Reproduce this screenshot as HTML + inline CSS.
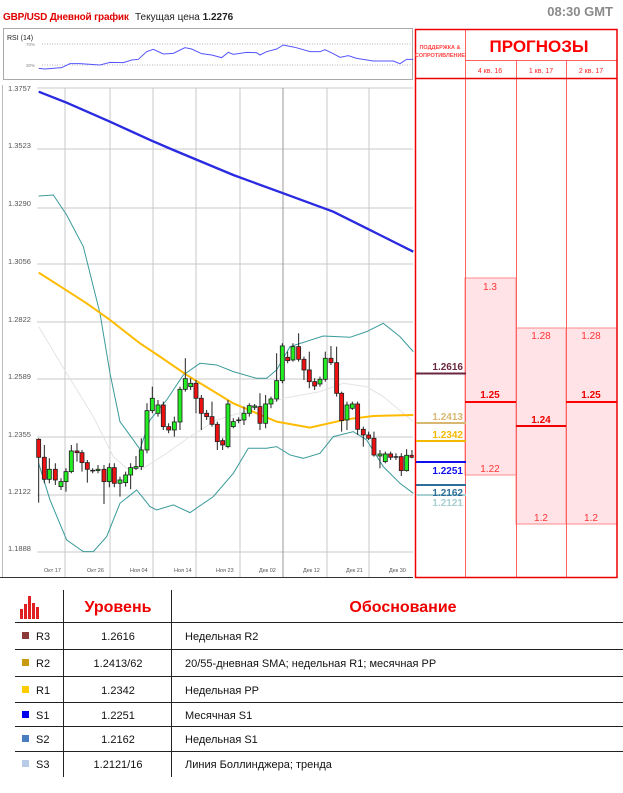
<!DOCTYPE html>
<html><head><meta charset="utf-8"><style>
body{margin:0;width:623px;height:793px;background:#fff;font-family:"Liberation Sans","Noto Sans CJK SC",sans-serif;position:relative;overflow:hidden}
.a{position:absolute;white-space:nowrap}
</style></head><body>
<div class="a" style="left:3px;top:12px;font-size:10px;color:#e00000;font-weight:bold;letter-spacing:-0.2px">GBP/USD Дневной график</div>
<div class="a" style="left:135px;top:12px;font-size:10px;color:#222">Текущая цена <b>1.2276</b></div>
<div class="a" style="right:10px;top:4px;font-size:13px;color:#8a8a8a;font-weight:bold">08:30 GMT</div>

<svg class="a" style="left:0;top:0" width="623" height="793">
<rect x="3.5" y="28.5" width="409" height="51" fill="#fff" stroke="#aaa"/>
<text x="7" y="40" font-size="7" font-family="Liberation Sans" fill="#222">RSI (14)</text>
<line x1="42" y1="44" x2="411" y2="44" stroke="#999" stroke-dasharray="1,1.5" stroke-width="0.7"/>
<line x1="42" y1="65" x2="411" y2="65" stroke="#999" stroke-dasharray="1,1.5" stroke-width="0.7"/>
<text x="26" y="46" font-size="4.5" fill="#888">70%</text><text x="26" y="67" font-size="4.5" fill="#888">30%</text>
<g transform="translate(0,25) scale(0.3333)">
<polyline fill="none" stroke="#5555ff" stroke-width="3" points="116,130 135,132 185,128 210,116 240,116 300,120 330,112 370,113 395,105 415,103 440,80 460,73 490,87 520,85 555,68 575,72 605,86 635,90 665,98 685,82 700,88 740,82 770,83 780,90 800,80 830,72 850,60 885,67 930,80 960,80 975,74 1000,86 1020,97 1045,92 1070,100 1120,108 1180,108 1200,116 1220,103 1240,103"/>
</g>

<g stroke="#c8c8c8" stroke-width="1">
<line x1="37" y1="88" x2="413" y2="88"/><line x1="37" y1="149" x2="413" y2="149"/><line x1="37" y1="208" x2="413" y2="208"/><line x1="37" y1="264" x2="413" y2="264"/><line x1="37" y1="322" x2="413" y2="322"/><line x1="37" y1="379" x2="413" y2="379"/><line x1="37" y1="437" x2="413" y2="437"/><line x1="37" y1="495" x2="413" y2="495"/><line x1="37" y1="552" x2="413" y2="552"/>
<line x1="65" y1="88" x2="65" y2="577"/><line x1="110" y1="88" x2="110" y2="577"/><line x1="153" y1="88" x2="153" y2="577"/><line x1="196" y1="88" x2="196" y2="577"/><line x1="240" y1="88" x2="240" y2="577"/><line x1="283" y1="88" x2="283" y2="577" stroke="#999"/><line x1="327" y1="88" x2="327" y2="577"/><line x1="369" y1="88" x2="369" y2="577"/>
</g>
<line x1="2.5" y1="85" x2="2.5" y2="577" stroke="#bbb"/>
<line x1="0" y1="577.5" x2="413" y2="577.5" stroke="#333"/>
<g font-size="7.5" fill="#555">
<text x="8" y="91">1.3757</text><text x="8" y="148">1.3523</text><text x="8" y="206">1.3290</text><text x="8" y="264">1.3056</text><text x="8" y="322">1.2822</text><text x="8" y="379">1.2589</text><text x="8" y="437">1.2355</text><text x="8" y="494">1.2122</text><text x="8" y="551">1.1888</text>
</g>
<g font-size="5.5" fill="#555">
<text x="44" y="572">Окт 17</text><text x="87" y="572">Окт 26</text><text x="130" y="572">Ноя 04</text><text x="174" y="572">Ноя 14</text><text x="216" y="572">Ноя 23</text><text x="259" y="572">Дек 02</text><text x="303" y="572">Дек 12</text><text x="346" y="572">Дек 21</text><text x="389" y="572">Дек 30</text>
</g>
<g transform="translate(0,80) scale(0.3333)" fill="none">
<polyline stroke="#e4e4e4" stroke-width="3" points="116,740 200,880 280,1010 340,1130 380,1165 430,1165 500,1120 570,1070 650,1020 750,990 850,955 960,935 1030,910 1100,920 1150,950 1240,1025"/>
<polyline stroke="#3a9a9a" stroke-width="3" points="116,348 160,345 200,405 250,500 300,700 330,880 360,1025 400,1080 420,1108 450,1020 500,960 550,885 600,850 650,855 700,875 770,895 800,895 830,870 870,800 970,768 1050,772 1100,755 1150,730 1200,770 1240,815"/>
<polyline stroke="#3a9a9a" stroke-width="3" points="116,1150 150,1260 200,1380 250,1415 280,1415 320,1370 360,1270 410,1230 450,1280 470,1290 520,1275 570,1298 640,1250 700,1180 745,1105 800,1105 830,1100 870,1125 910,1135 960,1120 1000,1070 1060,1055 1100,1080 1150,1160 1200,1210 1240,1240"/>
<polyline stroke="#2a2ae0" stroke-width="7" points="116,35 200,68 330,125 450,180 520,210 700,285 850,340 1000,395 1100,445 1240,515"/>
<polyline stroke="#ffbb00" stroke-width="6" points="116,578 190,625 260,670 330,720 420,790 480,830 560,885 700,970 830,1025 930,1043 1040,1018 1120,1008 1240,1005"/>
<g stroke="#222" stroke-width="3">
<path d="M116,1075V1268M133,1095V1210M148,1135V1210M166,1150V1215M183,1195V1230M198,1165V1235M214,1095V1180M231,1090V1145M246,1110V1175M262,1140V1208M278,1165V1180M294,1155V1180M312,1155V1272M328,1150V1222M343,1150V1222M360,1190V1250M377,1175V1220M392,1150V1228M408,1128V1170M424,1075V1170M441,970V1120M457,920V1000M474,960V1010M490,965V1050M506,1030V1060M523,1010V1070M540,920V1050M556,835V935M572,895V930M588,900V1000M604,945V1050M620,990V1020M636,965V1040M652,1025V1110M668,1075V1110M684,960V1105M700,1015V1045M716,1012V1030M732,980V1035M748,970V1010M764,972V990M780,940V1050M797,945V1045M813,950V985M830,820V965M847,790V910M863,815V850M879,790V845M896,760V845M912,830V900M928,815V925M944,895V930M960,890V920M976,815V905M993,798V855M1010,800V950M1025,935V1055M1041,965V1050M1057,965V990M1073,965V1065M1090,1040V1100M1106,1055V1080M1122,1055V1130M1140,1110V1165M1156,1115V1150M1172,1115V1140M1188,1120V1140M1204,1120V1188M1220,1108V1175M1236,1110V1135"/>
</g>
<g stroke="#222" stroke-width="2.5">
<rect x="110" y="1078" width="12" height="54" fill="#ee1111"/><rect x="127" y="1132" width="12" height="66" fill="#ee1111"/><rect x="142" y="1168" width="12" height="30" fill="#22ee22"/><rect x="160" y="1168" width="12" height="32" fill="#ee1111"/><rect x="177" y="1205" width="12" height="15" fill="#22ee22"/><rect x="192" y="1175" width="12" height="30" fill="#22ee22"/><rect x="208" y="1113" width="12" height="62" fill="#22ee22"/><rect x="225" y="1113" width="12" height="5" fill="#ee1111"/><rect x="240" y="1118" width="12" height="30" fill="#ee1111"/><rect x="256" y="1148" width="12" height="20" fill="#ee1111"/><rect x="272" y="1171" width="12" height="2" fill="#ee1111"/><rect x="288" y="1168" width="12" height="4" fill="#22ee22"/><rect x="306" y="1168" width="12" height="37" fill="#ee1111"/><rect x="322" y="1163" width="12" height="42" fill="#22ee22"/><rect x="337" y="1163" width="12" height="47" fill="#ee1111"/><rect x="354" y="1200" width="12" height="10" fill="#22ee22"/><rect x="371" y="1185" width="12" height="23" fill="#22ee22"/><rect x="386" y="1163" width="12" height="22" fill="#22ee22"/><rect x="402" y="1160" width="12" height="5" fill="#22ee22"/><rect x="418" y="1110" width="12" height="50" fill="#22ee22"/><rect x="435" y="992" width="12" height="118" fill="#22ee22"/><rect x="451" y="955" width="12" height="37" fill="#22ee22"/><rect x="468" y="975" width="12" height="25" fill="#22ee22"/><rect x="484" y="975" width="12" height="65" fill="#ee1111"/><rect x="500" y="1040" width="12" height="10" fill="#ee1111"/><rect x="517" y="1026" width="12" height="24" fill="#22ee22"/><rect x="534" y="928" width="12" height="98" fill="#22ee22"/><rect x="550" y="896" width="12" height="32" fill="#22ee22"/><rect x="566" y="910" width="12" height="10" fill="#22ee22"/><rect x="582" y="910" width="12" height="45" fill="#ee1111"/><rect x="598" y="955" width="12" height="45" fill="#ee1111"/><rect x="614" y="1000" width="12" height="10" fill="#ee1111"/><rect x="630" y="1010" width="12" height="23" fill="#ee1111"/><rect x="646" y="1033" width="12" height="52" fill="#ee1111"/><rect x="662" y="1082" width="12" height="13" fill="#ee1111"/><rect x="678" y="972" width="12" height="128" fill="#22ee22"/><rect x="694" y="1025" width="12" height="15" fill="#22ee22"/><rect x="710" y="1020" width="12" height="2" fill="#22ee22"/><rect x="726" y="1000" width="12" height="20" fill="#22ee22"/><rect x="742" y="977" width="12" height="23" fill="#22ee22"/><rect x="758" y="978" width="12" height="4" fill="#22ee22"/><rect x="774" y="980" width="12" height="50" fill="#ee1111"/><rect x="791" y="972" width="12" height="58" fill="#22ee22"/><rect x="807" y="957" width="12" height="15" fill="#22ee22"/><rect x="824" y="902" width="12" height="55" fill="#22ee22"/><rect x="841" y="798" width="12" height="104" fill="#22ee22"/><rect x="857" y="832" width="12" height="10" fill="#ee1111"/><rect x="873" y="800" width="12" height="40" fill="#22ee22"/><rect x="890" y="800" width="12" height="38" fill="#ee1111"/><rect x="906" y="838" width="12" height="32" fill="#ee1111"/><rect x="922" y="870" width="12" height="35" fill="#ee1111"/><rect x="938" y="905" width="12" height="13" fill="#ee1111"/><rect x="954" y="898" width="12" height="14" fill="#22ee22"/><rect x="970" y="835" width="12" height="63" fill="#22ee22"/><rect x="987" y="835" width="12" height="13" fill="#ee1111"/><rect x="1004" y="848" width="12" height="92" fill="#ee1111"/><rect x="1019" y="940" width="12" height="82" fill="#ee1111"/><rect x="1035" y="975" width="12" height="45" fill="#22ee22"/><rect x="1051" y="972" width="12" height="13" fill="#22ee22"/><rect x="1067" y="972" width="12" height="76" fill="#ee1111"/><rect x="1084" y="1048" width="12" height="17" fill="#ee1111"/><rect x="1100" y="1065" width="12" height="10" fill="#ee1111"/><rect x="1116" y="1075" width="12" height="50" fill="#ee1111"/><rect x="1134" y="1122" width="12" height="6" fill="#22ee22"/><rect x="1150" y="1122" width="12" height="23" fill="#22ee22"/><rect x="1166" y="1122" width="12" height="10" fill="#ee1111"/><rect x="1182" y="1130" width="12" height="2" fill="#ee1111"/><rect x="1198" y="1130" width="12" height="42" fill="#ee1111"/><rect x="1214" y="1126" width="12" height="46" fill="#22ee22"/><rect x="1230" y="1126" width="10" height="6" fill="#ee1111"/>
</g>
</g>

<rect x="465" y="278" width="51" height="197" fill="#ffe3e6" stroke="#ff8a8a"/>
<rect x="516" y="328" width="50" height="196" fill="#ffe3e6" stroke="#ff8a8a"/>
<rect x="566" y="328" width="51" height="196" fill="#ffe3e6" stroke="#ff8a8a"/>
<g stroke="#ff6060" stroke-width="1">
<line x1="465.5" y1="29" x2="465.5" y2="577"/><line x1="516.5" y1="61" x2="516.5" y2="577"/><line x1="566.5" y1="61" x2="566.5" y2="577"/>
<line x1="465" y1="60.5" x2="617" y2="60.5"/>
</g>
<rect x="415.5" y="29.5" width="201.5" height="548" fill="none" stroke="#e00" stroke-width="1.5"/>
<line x1="415" y1="78.5" x2="617" y2="78.5" stroke="#e00" stroke-width="1.5"/>
<line x1="465" y1="402" x2="516" y2="402" stroke="#f00" stroke-width="2"/>
<line x1="516" y1="426" x2="566" y2="426" stroke="#e00" stroke-width="2"/>
<line x1="566" y1="402" x2="617" y2="402" stroke="#f00" stroke-width="2"/>
<g font-size="10" fill="#f33" text-anchor="middle">
<text x="490" y="290">1.3</text><text x="490" y="472">1.22</text><text x="541" y="339">1.28</text><text x="591" y="339">1.28</text><text x="541" y="521">1.2</text><text x="591" y="521">1.2</text>
</g>
<g font-size="10" font-weight="bold" fill="#e00" text-anchor="middle">
<text x="490" y="398">1.25</text><text x="541" y="423">1.24</text><text x="591" y="398">1.25</text>
</g>
<g font-size="5.5" font-weight="bold" fill="#f44" text-anchor="middle"><text x="440" y="49">ПОДДЕРЖКА &amp;</text><text x="440" y="57">СОПРОТИВЛЕНИЕ</text></g>
<text x="539" y="52" font-size="17" font-weight="bold" fill="#f00" text-anchor="middle">ПРОГНОЗЫ</text>
<g font-size="7" fill="#f22" text-anchor="middle"><text x="490" y="73">4 кв. 16</text><text x="541" y="73">1 кв. 17</text><text x="591" y="73">2 кв. 17</text></g>
<line x1="416" y1="373.5" x2="466" y2="373.5" stroke="#6b2740" stroke-width="2"/>
<line x1="416" y1="423" x2="466" y2="423" stroke="#d8b870" stroke-width="2"/>
<line x1="416" y1="441" x2="466" y2="441" stroke="#f5b800" stroke-width="2"/>
<line x1="416" y1="462" x2="466" y2="462" stroke="#1010ee" stroke-width="2"/>
<line x1="416" y1="485" x2="466" y2="485" stroke="#2e6e9a" stroke-width="2"/>
<line x1="416" y1="495" x2="466" y2="495" stroke="#a8d0d0" stroke-width="2"/>
<g font-size="10" font-weight="bold" text-anchor="end">
<text x="463" y="370" fill="#6b2740">1.2616</text><text x="463" y="420" fill="#d8b870">1.2413</text><text x="463" y="438" fill="#f5b800">1.2342</text><text x="463" y="474" fill="#1010ee">1.2251</text><text x="463" y="496" fill="#2e6e9a">1.2162</text><text x="463" y="506" fill="#a8d0d0">1.2121</text>
</g>

<g stroke="#222" stroke-width="1">
<line x1="63.5" y1="590" x2="63.5" y2="777"/><line x1="171.5" y1="590" x2="171.5" y2="777"/>
<line x1="15" y1="622.5" x2="623" y2="622.5"/><line x1="15" y1="649.5" x2="623" y2="649.5"/><line x1="15" y1="676.5" x2="623" y2="676.5"/><line x1="15" y1="702.5" x2="623" y2="702.5"/><line x1="15" y1="726.5" x2="623" y2="726.5"/><line x1="15" y1="751.5" x2="623" y2="751.5"/>
</g>
<g fill="#e02020"><rect x="20" y="609" width="3" height="10"/><rect x="24" y="604" width="3" height="15"/><rect x="28" y="596" width="3" height="23"/><rect x="32" y="603" width="3" height="16"/><rect x="36" y="607" width="3" height="12"/></g>
<text x="118" y="612" font-size="16" font-weight="bold" fill="#e00" text-anchor="middle">Уровень</text>
<text x="403" y="612" font-size="16" font-weight="bold" fill="#e00" text-anchor="middle">Обоснование</text>
<rect x="22" y="632" width="7" height="7" fill="#8b3a3a"/><rect x="22" y="659" width="7" height="7" fill="#c89a10"/><rect x="22" y="686" width="7" height="7" fill="#ffcc00"/><rect x="22" y="711" width="7" height="7" fill="#0000ee"/><rect x="22" y="735" width="7" height="7" fill="#4a7cc0"/><rect x="22" y="760" width="7" height="7" fill="#b8cce8"/>
<g font-size="11" fill="#111">
<text x="36" y="640">R3</text><text x="36" y="667">R2</text><text x="36" y="694">R1</text><text x="36" y="719">S1</text><text x="36" y="743">S2</text><text x="36" y="768">S3</text>
<g text-anchor="middle"><text x="118" y="640">1.2616</text><text x="118" y="667">1.2413/62</text><text x="118" y="694">1.2342</text><text x="118" y="719">1.2251</text><text x="118" y="743">1.2162</text><text x="118" y="768">1.2121/16</text></g>
<text x="185" y="640">Недельная R2</text><text x="185" y="667">20/55-дневная SMA; недельная R1; месячная PP</text><text x="185" y="694">Недельная PP</text><text x="185" y="719">Месячная S1</text><text x="185" y="743">Недельная S1</text><text x="185" y="768">Линия Боллинджера; тренда</text>
</g>
</svg>
</body></html>
